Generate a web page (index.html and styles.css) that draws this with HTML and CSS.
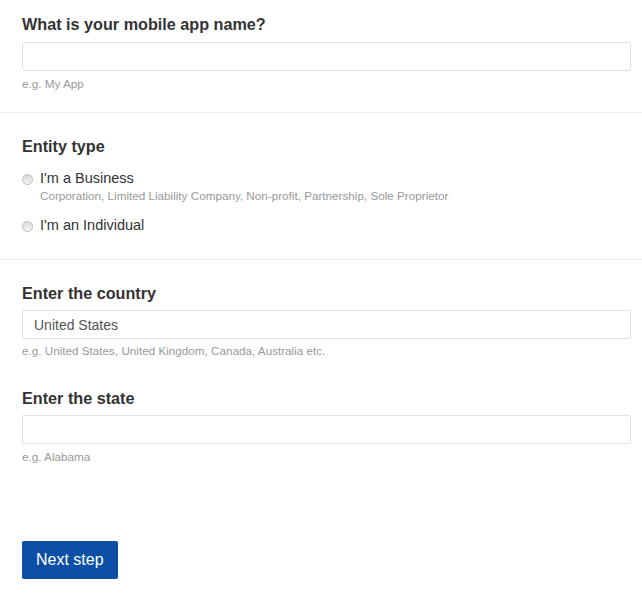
FILE: index.html
```html
<!DOCTYPE html>
<html>
<head>
<meta charset="utf-8">
<link rel="stylesheet" href="styles.css">
</head>
<body>
<div class="form">
  <section class="section first">
    <h2 class="title">What is your mobile app name?</h2>
    <div class="field"></div>
    <p class="hint">e.g. My App</p>
  </section>
  <section class="section entity">
    <h2 class="title">Entity type</h2>
    <div class="option">
      <span class="radio"></span>
      <div class="option-text">
        <div class="option-label">I'm a Business</div>
        <div class="option-desc">Corporation, Limited Liability Company, Non-profit, Partnership, Sole Proprietor</div>
      </div>
    </div>
    <div class="option">
      <span class="radio"></span>
      <div class="option-text">
        <div class="option-label">I'm an Individual</div>
      </div>
    </div>
  </section>
  <section class="section last">
    <h2 class="title">Enter the country</h2>
    <div class="field"><span class="value">United States</span></div>
    <p class="hint tight">e.g. United States, United Kingdom, Canada, Australia etc.</p>
    <h2 class="title second">Enter the state</h2>
    <div class="field"></div>
    <p class="hint">e.g. Alabama</p>
    <div class="actions">
      <button class="btn">Next step</button>
    </div>
  </section>
</div>
</body>
</html>
```
FILE: styles.css
```css
html, body {
  margin: 0;
  padding: 0;
  background: #fff;
}
body {
  font-family: "Liberation Sans", Arial, sans-serif;
  color: #333;
}
.section {
  padding: 14px 11px 21px 22px;
  border-bottom: 1px solid #eeeeee;
}
.section.entity {
  padding-top: 23px;
  padding-bottom: 25px;
}
.section.last {
  border-bottom: none;
  padding-top: 23px;
  padding-bottom: 0;
}
.title {
  margin: 0;
  font-size: 16.2px;
  line-height: 20px;
  font-weight: bold;
  color: #333;
}
.title.second {
  margin-top: 30px;
}
.field {
  margin-top: 8px;
  height: 27px;
  border: 1px solid #e1e1e1;
  border-radius: 2px;
  display: flex;
  align-items: center;
  padding: 0 11px;
}
.section.last .field {
  margin-top: 7px;
}
.value {
  font-size: 14px;
  color: #555;
}
.hint {
  margin: 6px 0 0;
  font-size: 11.7px;
  line-height: 14px;
  color: #999;
}
.hint.tight {
  margin-top: 5px;
}
.option {
  display: flex;
  align-items: flex-start;
  margin-top: 14px;
}
.option + .option {
  margin-top: 14px;
}
.radio {
  width: 9px;
  height: 9px;
  border-radius: 50%;
  border: 1px solid #bdbdbd;
  background: linear-gradient(#d8d8d8, #f5f5f5);
  margin: 4px 7px 0 0;
  flex: none;
}
.option-label {
  font-size: 14.5px;
  line-height: 17px;
  color: #333;
}
.option-desc {
  font-size: 11.7px;
  line-height: 14px;
  color: #999;
  margin-top: 2px;
}
.actions {
  margin-top: 77px;
}
.btn {
  background: #0b4fa6;
  color: #fff;
  border: none;
  border-radius: 2px;
  font-family: "Liberation Sans", Arial, sans-serif;
  font-size: 16px;
  height: 38px;
  padding: 0 14px;
  cursor: pointer;
}
```
